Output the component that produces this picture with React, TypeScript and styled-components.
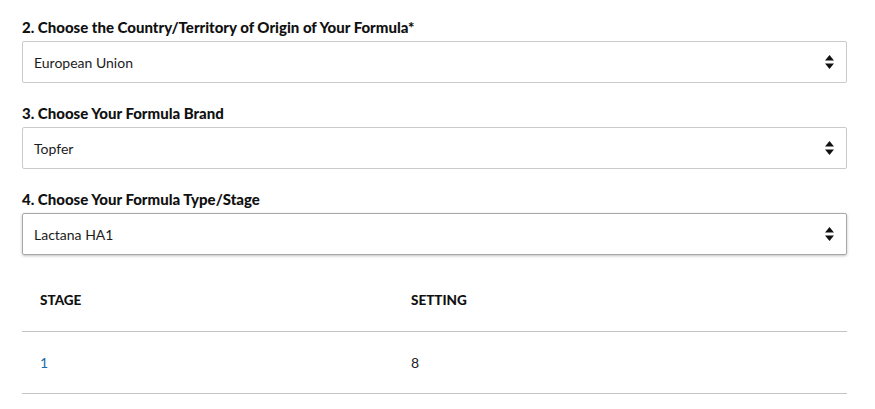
import { styled, createGlobalStyle } from "styled-components";

const GlobalStyle = createGlobalStyle`
  body {
    margin: 0;
    background: #fff;
    font-family: Lato, "Open Sans", Arial, sans-serif;
  }
`;

const ArrowIcon = () => (
  <svg width="9" height="14" viewBox="0 0 9 14">
    <path d="M4.5 0 L9 5.5 H0 Z" fill="#111" />
    <path d="M4.5 14 L9 8.5 H0 Z" fill="#111" />
  </svg>
);

const fields = [
  { label: "2. Choose the Country/Territory of Origin of Your Formula*", value: "European Union", active: false },
  { label: "3. Choose Your Formula Brand", value: "Topfer", active: false },
  { label: "4. Choose Your Formula Type/Stage", value: "Lactana HA1", active: true },
];

const rows = [{ stage: "1", setting: "8" }];

const App = () => {
  return (
    <>
      <GlobalStyle />
      <Page>
        {fields.map((f) => (
          <Field key={f.label}>
            <Label>{f.label}</Label>
            <SelectBox $active={f.active}>
              <span>{f.value}</span>
              <Arrow>
                <ArrowIcon />
              </Arrow>
            </SelectBox>
          </Field>
        ))}
        <Table>
          <HeadRow>
            <HeadCell>STAGE</HeadCell>
            <HeadCell>SETTING</HeadCell>
          </HeadRow>
          {rows.map((r) => (
            <Row key={r.stage}>
              <StageCell>{r.stage}</StageCell>
              <Cell>{r.setting}</Cell>
            </Row>
          ))}
        </Table>
      </Page>
    </>
  );
};

export default App;

const Page = styled.div`
  width: 825px;
  padding: 17px 0 0 22px;
  display: flex;
  flex-direction: column;
  gap: 20px;
`;

const Field = styled.div`
  display: flex;
  flex-direction: column;
  gap: 4px;
`;

const Label = styled.div`
  font-size: 15px;
  font-weight: 900;
  line-height: 20px;
  color: #111;
`;

const SelectBox = styled.div<{ $active: boolean }>`
  position: relative;
  display: flex;
  align-items: center;
  box-sizing: border-box;
  height: 42px;
  padding: 0 11px;
  border: 1px solid ${(p) => (p.$active ? "#a8a8a8" : "#cacaca")};
  border-radius: 2px;
  box-shadow: ${(p) => (p.$active ? "0 1px 3px rgba(0, 0, 0, 0.25)" : "none")};
  font-size: 14px;
  color: #1c1c1c;
`;

const Arrow = styled.span`
  position: absolute;
  right: 12px;
  top: 50%;
  transform: translateY(-50%);
  display: flex;
`;

const Table = styled.div`
  display: flex;
  flex-direction: column;
  margin-top: -6px;
`;

const HeadRow = styled.div`
  display: grid;
  grid-template-columns: 371px 1fr;
  height: 62px;
  align-items: center;
  padding-left: 18px;
  border-bottom: 1px solid #c4c4c4;
`;

const Row = styled(HeadRow)`
  box-sizing: border-box;
`;

const HeadCell = styled.div`
  font-size: 13.5px;
  font-weight: 900;
  color: #111;
`;

const Cell = styled.div`
  font-size: 14px;
  color: #222;
`;

const StageCell = styled(Cell)`
  color: #1a6aa8;
`;
